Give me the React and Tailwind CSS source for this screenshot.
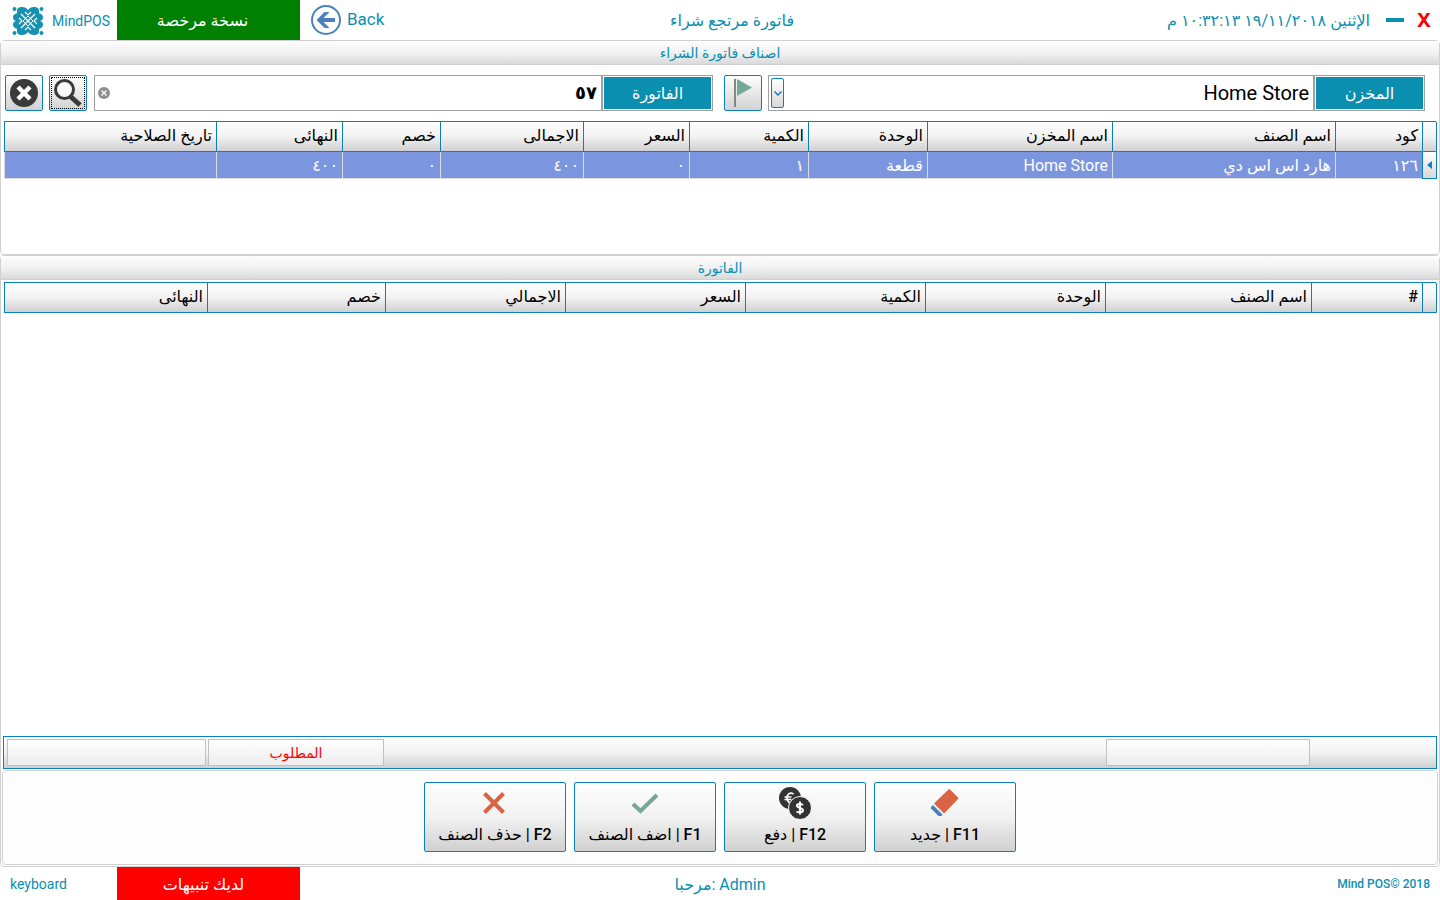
import React from 'react'
import clsx from 'clsx'

const ITEM_COLS = [
  { label: 'كود', width: 'w-[87px]' },
  { label: 'اسم الصنف', width: 'w-[223px]' },
  { label: 'اسم المخزن', width: 'w-[185px]' },
  { label: 'الوحدة', width: 'w-[119px]' },
  { label: 'الكمية', width: 'w-[119px]' },
  { label: 'السعر', width: 'w-[106px]' },
  { label: 'الاجمالى', width: 'w-[143px]' },
  { label: 'خصم', width: 'w-[98px]' },
  { label: 'النهائى', width: 'w-[126px]' },
  { label: 'تاريخ الصلاحية', width: '' },
]

const ITEM_ROW = ['١٢٦', 'هارد اس اس دي', 'Home Store', 'قطعة', '١', '٠', '٤٠٠', '٠', '٤٠٠', '']

const INVOICE_COLS = [
  { label: '#', width: 'w-[111px]' },
  { label: 'اسم الصنف', width: 'w-[206px]' },
  { label: 'الوحدة', width: 'w-[180px]' },
  { label: 'الكمية', width: 'w-[180px]' },
  { label: 'السعر', width: 'w-[180px]' },
  { label: 'الاجمالي', width: 'w-[180px]' },
  { label: 'خصم', width: 'w-[178px]' },
  { label: 'النهائى', width: '' },
]

function Logo() {
  return (
    <svg viewBox="0 0 32 30" className="h-[30px] w-8" aria-hidden="true">
      <g fill="#1791b3">
        <circle cx="2.5" cy="3" r="2" />
        <circle cx="29.5" cy="3" r="2" />
        <circle cx="2.5" cy="27" r="2" />
        <circle cx="29.5" cy="27" r="2" />
        <path d="M10 1c3 0 4.5 1 6 3 1.500-2 3-3 6-3 3 0 5 1 5 4 0 1.500 0 2 .5 2.500C30 8 31 9.500 31 11.500c0 2-1 3-3 3.500 2 .5 3 1.500 3 3.500s-1 3.500-3.500 4c-.5.500-.5 1-.5 2.500 0 3-2 4-5 4s-4.500-1-6-3c-1.500 2-3 3-6 3s-5-1-5-4c0-1.500 0-2-.5-2.500C2 22 1 20.500 1 18.500s1-3 3-3.500c-2-.5-3-1.500-3-3.500s1-3.500 3.500-4C5 7 5 6.500 5 5c0-3 2-4 5-4z" />
      </g>
      <g stroke="#fff" fill="none">
        <path d="M9 8l14 14M23 8L9 22" strokeWidth="1.4" />
        <path d="M13 6l3 3 3-3M13 24l3-3 3 3M7 12l3 3-3 3M25 12l-3 3 3 3" strokeWidth="1.2" />
        <path d="M16 10l5 5-5 5-5-5z" strokeWidth=".9" />
      </g>
    </svg>
  )
}

function BackIcon() {
  return (
    <svg viewBox="0 0 30 30" className="size-[30px]" aria-hidden="true">
      <circle cx="15" cy="15" r="14" fill="none" stroke="#4a80bd" strokeWidth="2" />
      <path d="M5.5 15l8-8h5l-6 6H24v4H12.500l6 6h-5z" fill="#4a80bd" />
    </svg>
  )
}

function ClearIcon() {
  return (
    <svg viewBox="0 0 28 28" className="size-7" aria-hidden="true">
      <circle cx="14" cy="14" r="14" fill="#3a3a3a" />
      <path d="M8 8l12 12M20 8L8 20" stroke="#fff" strokeWidth="4.5" />
    </svg>
  )
}

function SearchIcon() {
  return (
    <svg viewBox="0 0 28 28" className="size-7" aria-hidden="true">
      <path d="M15 16l3 3" stroke="#3a3a3a" strokeWidth="3" />
      <path d="M17 18l9 8" stroke="#3a3a3a" strokeWidth="5" />
      <circle cx="10.5" cy="10.5" r="9" fill="#f7f7f7" stroke="#3a3a3a" strokeWidth="3" />
    </svg>
  )
}

function FlagIcon() {
  return (
    <svg viewBox="0 0 18 28" className="h-7 w-[18px]" aria-hidden="true">
      <path d="M0 0h2v28H0z" fill="#868686" />
      <path d="M3 0l15 8.500L3 17z" fill="#76a797" />
    </svg>
  )
}

function EraserIcon() {
  return (
    <svg viewBox="0 0 32 32" className="size-8" aria-hidden="true">
      <path d="M19.500 2.500a1 1 0 011.500 0l8 8a1 1 0 010 1.500L15 26.500 5 16.500z" fill="#d96344" />
      <path d="M4 18l9.500 9.500-1 1.500H9.500L2 21.500V20z" fill="#4a80bd" />
    </svg>
  )
}

function CoinsIcon() {
  return (
    <svg viewBox="0 0 32 32" className="size-8" aria-hidden="true">
      <circle cx="11" cy="11" r="11" fill="#333" />
      <path d="M14.500 7c-3.500-2-6.500 0-6.500 4s3 6 6.500 4M5.500 10h7M5.500 12.500h7" fill="none" stroke="#fff" strokeWidth="1.7" />
      <circle cx="21" cy="21" r="11.500" fill="#333" stroke="#f8f8f8" />
      <path d="M24 18c-2-1.500-6-1.500-6 .5 0 3 6 2 6 5 0 2-4 2.500-6.500 1M21 14.500v13" fill="none" stroke="#fff" strokeWidth="2" />
    </svg>
  )
}

function CheckIcon() {
  return (
    <svg viewBox="0 0 32 32" className="size-8" aria-hidden="true">
      <path d="M4 17l7.500 7L28 8" fill="none" stroke="#76a797" strokeWidth="4" />
    </svg>
  )
}

function CrossIcon() {
  return (
    <svg viewBox="0 0 32 32" className="size-8" aria-hidden="true">
      <path d="M5.500 6.500l19 19M24.500 6.500l-19 19" stroke="#d96344" strokeWidth="4" />
    </svg>
  )
}

const ACTIONS = [
  { key: 'F11', label: 'جديد', icon: EraserIcon },
  { key: 'F12', label: 'دفع', icon: CoinsIcon },
  { key: 'F1', label: 'اضف الصنف', icon: CheckIcon },
  { key: 'F2', label: 'حذف الصنف', icon: CrossIcon },
]

function SectionTitle({ children }) {
  return (
    <h2 className="flex h-6 shrink-0 items-center justify-center border-b border-[#d0d0d0] bg-linear-to-b from-[#fdfdfd] via-[#f2f2f2] to-[#dadada] text-sm text-[#0a8fb1]">
      {children}
    </h2>
  )
}

function ToolButton({ label, focused, children }) {
  return (
    <button
      type="button"
      aria-label={label}
      className="flex h-9 w-[38px] shrink-0 rounded-xs border border-[#0a80c0] bg-linear-to-b from-[#fefefe] to-[#d2d2d2] p-px"
    >
      <span className={clsx('flex flex-1 items-center justify-center self-stretch', focused && 'border border-dotted border-black')}>
        {children}
      </span>
    </button>
  )
}

function Grid({ columns, row }) {
  return (
    <table className="w-full table-fixed border-separate border-spacing-0 text-base">
      <thead>
        <tr className="h-[31px]">
          <td className="w-[15px] rounded-tr-xs border border-[#0a80c0] bg-linear-to-b from-[#fefefe] via-[#f2f2f2] to-[#d0d0d0]" />
          {columns.map(({ label, width }) => (
            <th
              key={label}
              scope="col"
              className={clsx(
                'border-y border-l border-[#0a80c0] bg-linear-to-b from-[#fefefe] via-[#f2f2f2] to-[#d0d0d0] px-1 pt-0 pb-0.5 text-right leading-6 font-medium whitespace-nowrap text-black',
                width
              )}
            >
              {label}
            </th>
          ))}
        </tr>
      </thead>
      {row && (
        <tbody>
          <tr className="h-[27px]">
            <td className="border-x border-b border-[#0a80c0] bg-linear-to-b from-[#fefefe] to-[#d8d8d8] p-0">
              <svg viewBox="0 0 5 8" className="mx-auto h-2 w-[5px]" aria-hidden="true">
                <path d="M5 0v8L0 4z" fill="#0a80c0" />
              </svg>
            </td>
            {row.map((value, i) => (
              <td
                key={columns[i].label}
                className="border-b border-l border-[#dcdcdc] bg-[#7b96de] px-1 pt-0.5 pb-0 text-right leading-6 whitespace-nowrap text-white"
              >
                {value}
              </td>
            ))}
          </tr>
        </tbody>
      )}
    </table>
  )
}

function Header() {
  return (
    <header className="grid h-10 shrink-0 grid-cols-[1fr_auto_1fr] items-center text-[#0a8fb1]">
      <div className="flex items-center pr-2">
        <button type="button" aria-label="إغلاق" className="w-4 text-center font-['Noto_Sans',sans-serif] text-xl leading-6 font-bold text-[#f00]">
          X
        </button>
        <button type="button" aria-label="تصغير" className="mr-3 flex h-6 w-[18px] items-center">
          <span className="h-1 w-full bg-[#0a8fb1]" />
        </button>
        <time className="mr-4 pt-0.5 text-base">الإثنين ١٩/١١/٢٠١٨ ١٠:٣٢:١٣ م</time>
      </div>
      <h1 className="pt-0.5 pl-6 text-base">فاتورة مرتجع شراء</h1>
      <div dir="ltr" className="flex h-10 items-center">
        <div className="flex w-[117px] items-center gap-2 pt-0.5 pl-3">
          <Logo />
          <span className="text-sm">MindPOS</span>
        </div>
        <div className="flex h-10 w-[183px] items-center justify-center bg-[#008000] pt-0.5 pr-3 text-base text-white">
          نسخة مرخصة
        </div>
        <button type="button" className="ml-[11px] flex items-center gap-1.5 text-[17px]">
          <BackIcon />
          Back
        </button>
      </div>
    </header>
  )
}

function Toolbar() {
  return (
    <form className="flex pt-2.5 pr-[14px] pb-2.5 pl-1" onSubmit={(e) => e.preventDefault()}>
      <div className="relative flex h-9 flex-[657] border border-[#a0a0a0]">
        <label htmlFor="store" className="m-px flex w-[107px] items-center justify-center bg-[#0a8fb1] pt-0.5 text-base text-white">
          المخزن
        </label>
        <select id="store" defaultValue="home" className="min-w-0 flex-1 appearance-none border-r-2 border-[#a0a0a0] bg-white pr-1 text-xl text-black">
          <option value="home">Home Store</option>
        </select>
        <span className="pointer-events-none absolute top-0.5 bottom-0.5 left-0.5 flex w-[13px] items-center justify-center rounded-xs border border-[#0a80c0] bg-linear-to-b from-white to-[#d8d8d8]">
          <svg viewBox="0 0 8 5" className="h-[5px] w-2" aria-hidden="true">
            <path d="M.5.5L4 4 7.500.5" fill="none" stroke="#0a80c0" strokeWidth="1.5" />
          </svg>
        </span>
      </div>
      <div className="mr-1.5 ml-[11px] flex">
        <ToolButton label="تحديد المخزن">
          <FlagIcon />
        </ToolButton>
      </div>
      <div className="relative flex h-9 flex-[619] border border-[#a0a0a0]">
        <label htmlFor="invoice" className="m-px flex w-[107px] items-center justify-center bg-[#0a8fb1] pt-0.5 text-base text-white">
          الفاتورة
        </label>
        <input id="invoice" defaultValue="٥٧" className="min-w-0 flex-1 border-r-2 border-[#a0a0a0] bg-white pr-1 text-lg font-bold text-black" />
        <button type="button" aria-label="مسح" className="absolute inset-y-0 left-[3px] flex items-center">
          <svg viewBox="0 0 12 12" className="size-3" aria-hidden="true">
            <circle cx="6" cy="6" r="6" fill="#8e8e8e" />
            <path d="M3.500 3.500l5 5M8.500 3.500l-5 5" stroke="#fff" strokeWidth="1.3" />
          </svg>
        </button>
      </div>
      <div className="mr-[7px] flex gap-1.5">
        <ToolButton label="بحث" focused>
          <SearchIcon />
        </ToolButton>
        <ToolButton label="إلغاء">
          <ClearIcon />
        </ToolButton>
      </div>
    </form>
  )
}

function TotalsBar() {
  return (
    <div className="mx-0.5 flex h-[33px] shrink-0 border border-[#0a80c0] bg-linear-to-b from-[#fefefe] via-[#f2f2f2] to-[#d0d0d0] py-0.5 pr-[126px] pl-[3px]">
      <div className="w-[204px] border border-[#c0c0c0] bg-linear-to-b from-white to-[#ececec]" />
      <div className="flex-1" />
      <div className="flex w-44 items-center justify-center border border-[#c0c0c0] bg-linear-to-b from-white to-[#ececec] text-sm font-medium text-[#f00]">
        المطلوب
      </div>
      <div className="mr-0.5 w-[199px] border border-[#c0c0c0] bg-linear-to-b from-white to-[#ececec]" />
    </div>
  )
}

export default function App() {
  return (
    <div dir="rtl" className="flex min-h-screen flex-col bg-white font-['Roboto','DejaVu_Sans',sans-serif]">
      <Header />

      <section className="flex h-[215px] shrink-0 flex-col rounded-sm border border-[#d0d0d0]">
        <SectionTitle>اصناف فاتورة الشراء</SectionTitle>
        <Toolbar />
        <div className="pr-0.5 pl-[3px]">
          <Grid columns={ITEM_COLS} row={ITEM_ROW} />
        </div>
      </section>

      <section className="flex flex-1 flex-col rounded-sm border border-[#d0d0d0]">
        <SectionTitle>الفاتورة</SectionTitle>
        <div className="flex-1 pt-0.5 pr-0.5 pl-[3px]">
          <Grid columns={INVOICE_COLS} />
        </div>
        <TotalsBar />
        <div className="m-px flex h-[95px] shrink-0 items-center justify-center gap-2 rounded-sm border border-[#d0d0d0] bg-[#fdfdfd] pb-0.5">
          {ACTIONS.map(({ key, label, icon: Icon }) => (
            <button
              key={key}
              type="button"
              className="flex h-[70px] w-[142px] flex-col items-center gap-1 rounded-xs border border-[#0a80c0] bg-linear-to-b from-[#fefefe] via-[#f2f2f2] to-[#d0d0d0] pt-1 text-base leading-6 font-medium whitespace-nowrap text-black"
            >
              <Icon />
              <span>{key} | {label}</span>
            </button>
          ))}
        </div>
      </section>

      <footer className="grid h-[33px] shrink-0 grid-cols-[1fr_auto_1fr] items-center text-[#0a8fb1]">
        <small dir="ltr" className="pr-2.5 text-right text-xs font-medium">Mind POS© 2018</small>
        <span dir="ltr" className="pt-0.5 text-base">مرحبا: Admin</span>
        <div dir="ltr" className="flex h-full items-center">
          <button type="button" className="w-[117px] pl-2.5 text-left text-sm">keyboard</button>
          <button type="button" className="h-full w-[183px] bg-[#f00] pt-0.5 pr-2.5 text-base text-white">لديك تنبيهات</button>
        </div>
      </footer>
    </div>
  )
}
